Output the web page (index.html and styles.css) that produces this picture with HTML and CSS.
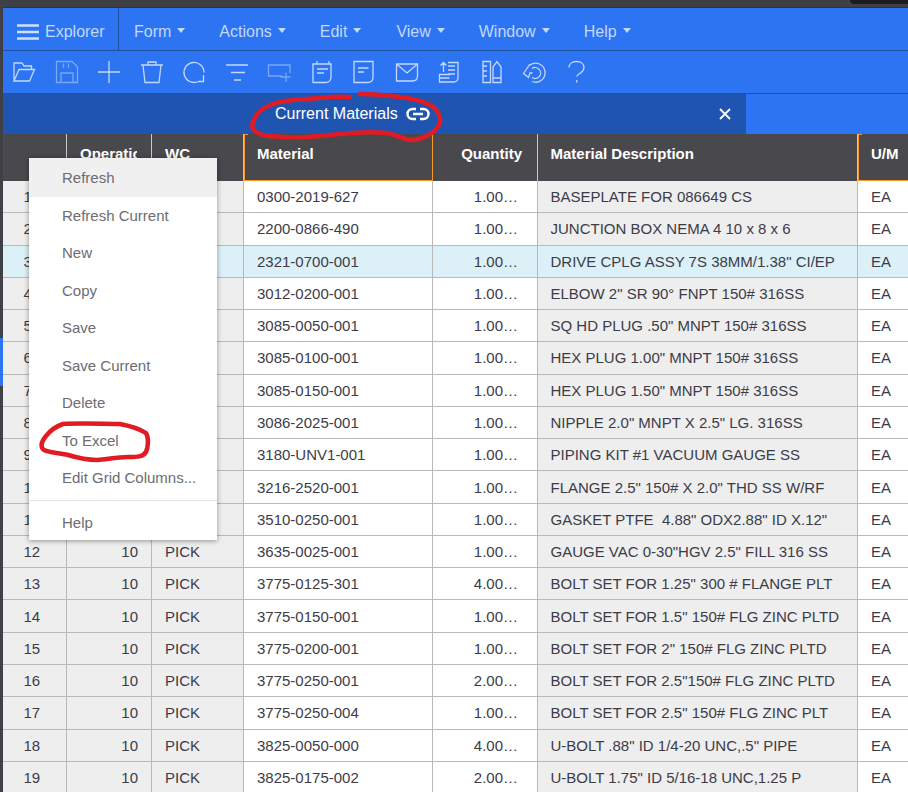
FILE: index.html
```html
<!DOCTYPE html>
<html lang="en">
<head>
<meta charset="utf-8">
<title>Current Materials</title>
<link rel="stylesheet" href="styles.css">
</head>
<body>
<div class="page">
  <div class="corner"></div>
  <nav class="menubar">
    <div class="explorer">
      <svg class="burger" viewBox="0 0 22 16" width="22" height="16"><path d="M0 1.500h22M0 8h22M0 14.500h22"/></svg>
      <span>Explorer</span>
    </div>
    <div class="menu-items">
      <span class="mi mi-form">Form<i class="caret"></i></span>
      <span class="mi mi-actions">Actions<i class="caret"></i></span>
      <span class="mi mi-edit">Edit<i class="caret"></i></span>
      <span class="mi mi-view">View<i class="caret"></i></span>
      <span class="mi mi-window">Window<i class="caret"></i></span>
      <span class="mi mi-help">Help<i class="caret"></i></span>
    </div>
  </nav>
  <div class="toolbar">
    <svg class="ti" viewBox="0 0 22 22"><path d="M1 20V2h8l2 3h7.500v3.500M1 20h15.500l5-11.500H6L1 20z"/></svg>
    <svg class="ti dim" viewBox="0 0 22 22"><path d="M.5 .5h15.500l5.500 5.500v15.500H.5zM5 21.500V12h12v9.500M7.500 2.500V7M12.500 2.500V7"/></svg>
    <svg class="ti" viewBox="0 0 22 22"><path d="M11 0v22M0 11h22"/></svg>
    <svg class="ti" viewBox="0 0 22 22"><path d="M0 4h22M2 4l2 17.500h14L20 4M7 4V1h8v3"/></svg>
    <svg class="ti" viewBox="0 0 22 22"><path d="M14.500 20.800A10 10 0 1 1 21 11.500M20.500 14v6.500H15"/></svg>
    <svg class="ti" viewBox="0 0 22 22"><path d="M0 4h22M5 11.500h14M8 19h7"/></svg>
    <svg class="ti dim" viewBox="0 0 22 22"><path d="M14 15H.5V4H22v8M18 11.500V21M12.500 16h10"/></svg>
    <svg class="ti" viewBox="0 0 22 22"><path d="M2 3h18v13q0 5-5 5.500H2zM6 0v3M18 0v3M6 8h11M6 12h7"/></svg>
    <svg class="ti" viewBox="0 0 22 22"><path d="M1 .5h19v16q0 4.500-5 5H1zM5 7h10.500M5 11h6"/></svg>
    <svg class="ti" viewBox="0 0 22 22"><path d="M.5 3h21v12q0 5-5 5H.5zM.5 3 11 12l10.500-9"/></svg>
    <svg class="ti" viewBox="0 0 22 22"><path d="M5.500 11V1.500M2.500 4.500l3-3 3 3M10 1.500h10v15q0 4-4 4.500H1.500v-7.500H12M10 5h7M10 9h7M10 13h7M1.500 17h10"/></svg>
    <svg class="ti" viewBox="0 0 22 22"><path d="M2 .5h7.500v21H2zM2 5h4M2 10h4M2 15h4M12 21.500V6l4-5.500L20 6v15.500zM12 17h8"/></svg>
    <svg class="ti" viewBox="0 0 22 22"><path d="M7 4A9.500 9.500 0 1 1 9 20.500M9 7.500A5.500 5.500 0 1 1 9 16.500M7 3 .5 12.500l5 4L7 12h2.500"/></svg>
    <svg class="ti" viewBox="0 0 22 22"><path d="M3 6.500C3 3 6 .5 10.500 .5S18 3 18 6.500c0 3.500-2.500 5-5 6.500-1.500 1-2.300 2.500-2.300 2.500M10.700 19v2.500"/></svg>
  </div>
  <div class="tabbar">
    <div class="tab">
      <span class="tab-title">Current Materials</span>
      <svg class="link" viewBox="0 0 24 14" width="24" height="14"><path d="M10 2H6.500a5 5 0 0 0 0 10H10M14 2h3.500a5 5 0 0 1 0 10H14M7 7h10"/></svg>
      <svg class="close" viewBox="0 0 12 12" width="12" height="12"><path d="M1 1l10 10M11 1 1 11"/></svg>
    </div>
  </div>
  <div class="grid">
    <div class="row head">
      <div class="c c-n"></div>
      <div class="c c-op"><span class="clip">Operation</span></div>
      <div class="c c-wc">WC</div>
      <div class="c c-mat sorted">Material</div>
      <div class="c c-qty">Quantity</div>
      <div class="c c-desc">Material Description</div>
      <div class="c c-um sorted">U/M</div>
    </div>
    <div class="row"><div class="c c-n">1</div><div class="c c-op"></div><div class="c c-wc"></div><div class="c c-mat">0300-2019-627</div><div class="c c-qty">1.00…</div><div class="c c-desc">BASEPLATE FOR 086649 CS</div><div class="c c-um">EA</div></div>
    <div class="row"><div class="c c-n">2</div><div class="c c-op"></div><div class="c c-wc"></div><div class="c c-mat">2200-0866-490</div><div class="c c-qty">1.00…</div><div class="c c-desc">JUNCTION BOX NEMA 4 10 x 8 x 6</div><div class="c c-um">EA</div></div>
    <div class="row selected"><div class="c c-n">3</div><div class="c c-op"></div><div class="c c-wc"></div><div class="c c-mat">2321-0700-001</div><div class="c c-qty">1.00…</div><div class="c c-desc">DRIVE CPLG ASSY 7S 38MM/1.38" CI/EP</div><div class="c c-um">EA</div></div>
    <div class="row"><div class="c c-n">4</div><div class="c c-op"></div><div class="c c-wc"></div><div class="c c-mat">3012-0200-001</div><div class="c c-qty">1.00…</div><div class="c c-desc">ELBOW 2" SR 90° FNPT 150# 316SS</div><div class="c c-um">EA</div></div>
    <div class="row"><div class="c c-n">5</div><div class="c c-op"></div><div class="c c-wc"></div><div class="c c-mat">3085-0050-001</div><div class="c c-qty">1.00…</div><div class="c c-desc">SQ HD PLUG .50" MNPT 150# 316SS</div><div class="c c-um">EA</div></div>
    <div class="row"><div class="c c-n">6</div><div class="c c-op"></div><div class="c c-wc"></div><div class="c c-mat">3085-0100-001</div><div class="c c-qty">1.00…</div><div class="c c-desc">HEX PLUG 1.00" MNPT 150# 316SS</div><div class="c c-um">EA</div></div>
    <div class="row"><div class="c c-n">7</div><div class="c c-op"></div><div class="c c-wc"></div><div class="c c-mat">3085-0150-001</div><div class="c c-qty">1.00…</div><div class="c c-desc">HEX PLUG 1.50" MNPT 150# 316SS</div><div class="c c-um">EA</div></div>
    <div class="row"><div class="c c-n">8</div><div class="c c-op"></div><div class="c c-wc"></div><div class="c c-mat">3086-2025-001</div><div class="c c-qty">1.00…</div><div class="c c-desc">NIPPLE 2.0" MNPT X 2.5" LG. 316SS</div><div class="c c-um">EA</div></div>
    <div class="row"><div class="c c-n">9</div><div class="c c-op"></div><div class="c c-wc"></div><div class="c c-mat">3180-UNV1-001</div><div class="c c-qty">1.00…</div><div class="c c-desc">PIPING KIT #1 VACUUM GAUGE SS</div><div class="c c-um">EA</div></div>
    <div class="row"><div class="c c-n">10</div><div class="c c-op"></div><div class="c c-wc"></div><div class="c c-mat">3216-2520-001</div><div class="c c-qty">1.00…</div><div class="c c-desc">FLANGE 2.5" 150# X 2.0" THD SS W/RF</div><div class="c c-um">EA</div></div>
    <div class="row"><div class="c c-n">11</div><div class="c c-op"></div><div class="c c-wc"></div><div class="c c-mat">3510-0250-001</div><div class="c c-qty">1.00…</div><div class="c c-desc">GASKET PTFE &nbsp;4.88" ODX2.88" ID X.12"</div><div class="c c-um">EA</div></div>
    <div class="row"><div class="c c-n">12</div><div class="c c-op">10</div><div class="c c-wc">PICK</div><div class="c c-mat">3635-0025-001</div><div class="c c-qty">1.00…</div><div class="c c-desc">GAUGE VAC 0-30"HGV 2.5" FILL 316 SS</div><div class="c c-um">EA</div></div>
    <div class="row"><div class="c c-n">13</div><div class="c c-op">10</div><div class="c c-wc">PICK</div><div class="c c-mat">3775-0125-301</div><div class="c c-qty">4.00…</div><div class="c c-desc">BOLT SET FOR 1.25" 300 # FLANGE PLT</div><div class="c c-um">EA</div></div>
    <div class="row"><div class="c c-n">14</div><div class="c c-op">10</div><div class="c c-wc">PICK</div><div class="c c-mat">3775-0150-001</div><div class="c c-qty">1.00…</div><div class="c c-desc">BOLT SET FOR 1.5" 150# FLG ZINC PLTD</div><div class="c c-um">EA</div></div>
    <div class="row"><div class="c c-n">15</div><div class="c c-op">10</div><div class="c c-wc">PICK</div><div class="c c-mat">3775-0200-001</div><div class="c c-qty">1.00…</div><div class="c c-desc">BOLT SET FOR 2" 150# FLG ZINC PLTD</div><div class="c c-um">EA</div></div>
    <div class="row"><div class="c c-n">16</div><div class="c c-op">10</div><div class="c c-wc">PICK</div><div class="c c-mat">3775-0250-001</div><div class="c c-qty">2.00…</div><div class="c c-desc">BOLT SET FOR 2.5"150# FLG ZINC PLTD</div><div class="c c-um">EA</div></div>
    <div class="row"><div class="c c-n">17</div><div class="c c-op">10</div><div class="c c-wc">PICK</div><div class="c c-mat">3775-0250-004</div><div class="c c-qty">1.00…</div><div class="c c-desc">BOLT SET FOR 2.5" 150# FLG ZINC PLT</div><div class="c c-um">EA</div></div>
    <div class="row"><div class="c c-n">18</div><div class="c c-op">10</div><div class="c c-wc">PICK</div><div class="c c-mat">3825-0050-000</div><div class="c c-qty">4.00…</div><div class="c c-desc">U-BOLT .88" ID 1/4-20 UNC,.5" PIPE</div><div class="c c-um">EA</div></div>
    <div class="row"><div class="c c-n">19</div><div class="c c-op">10</div><div class="c c-wc">PICK</div><div class="c c-mat">3825-0175-002</div><div class="c c-qty">2.00…</div><div class="c c-desc">U-BOLT 1.75" ID 5/16-18 UNC,1.25 P</div><div class="c c-um">EA</div></div>
  </div>
  <div class="left-accent"></div>
  <ul class="context">
    <li class="hover">Refresh</li>
    <li>Refresh Current</li>
    <li>New</li>
    <li>Copy</li>
    <li>Save</li>
    <li>Save Current</li>
    <li>Delete</li>
    <li>To Excel</li>
    <li>Edit Grid Columns...</li>
    <li class="sep">Help</li>
  </ul>
  <svg class="ink" viewBox="0 0 908 792" width="908" height="792">
    <path d="M350 97C330 96 320 98 307 99C290 100 280 101 273 104C263 108 258 112 256 116C252 122 251 127 254 130C258 134 262 135 268 136C280 137 295 138 307 137C320 136 330 135 340 134C360 132 375 132 387 133C397 134 405 141 413 140C422 139 428 136 433 132C438 127 441 124 440 119C439 112 436 108 430 105C420 100 410 98 400 97C385 95 372 94 360 94"/>
    <path d="M63 424C80 423 105 424 120 424C130 426 140 429 146 433C149 438 148 448 146 452C143 457 137 457 128 457C118 457 108 459 97 460C88 460 78 458 68 455C60 453 50 453 44 450C40 447 41 442 46 436C50 431 57 426 63 424Z"/>
  </svg>
</div>
</body>
</html>
```
FILE: styles.css
```css
* { box-sizing: border-box; }
html, body { margin: 0; height: 100%; overflow: hidden; }
body { background: #3f4045; font-family: "Liberation Sans", Arial, sans-serif; }
.page { position: relative; width: 908px; height: 792px; overflow: hidden; padding: 8px 0 0 3px; background: #3f4045; }
.corner { position: absolute; right: 0; top: 0; width: 58px; height: 4px; background: #1c1c1e; border-bottom-left-radius: 4px; }

.menubar { display: flex; height: 43px; background: #2c74f2; border-bottom: 1px solid #1f539f; box-shadow: 0 -1px 0 #333438; color: #c3d8fb; font-size: 16px; }
.explorer { display: flex; align-items: center; gap: 6px; width: 116px; padding: 5px 0 0 14px; border-right: 1px solid #1f539f; }
.burger { fill: none; stroke: #cfe0fd; stroke-width: 2.500; flex: none; }
.menu-items { display: flex; align-items: center; padding-top: 5px; }
.mi { display: inline-flex; align-items: center; }
.mi-form { margin-left: 15px; }
.mi-actions { margin-left: 34px; }
.mi-edit { margin-left: 34px; }
.mi-view { margin-left: 35px; }
.mi-window { margin-left: 34px; }
.mi-help { margin-left: 34px; }
.caret { width: 0; height: 0; margin-left: 6px; margin-top: -3px; border-left: 4px solid transparent; border-right: 4px solid transparent; border-top: 5px solid #c3d8fb; }

.toolbar { display: flex; align-items: center; gap: 20.500px; height: 42px; padding-left: 10px; background: #2c74f2; }
.ti { width: 22px; height: 22px; fill: none; stroke: #c3d8fb; stroke-width: 1.300; flex: none; overflow: visible; }
.ti.dim { stroke: #7aa8f5; }

.tabbar { height: 41px; background: #2c74f2; border-top: 1px solid #1f539f; }
.tab { display: flex; align-items: center; width: 743px; height: 40px; background: #1f55b0; padding-left: 272px; color: #fff; font-size: 16px; }
.tab-title { white-space: nowrap; }
.link { margin-left: 8px; fill: none; stroke: #fff; stroke-width: 2.400; }
.close { margin-left: 289px; fill: none; stroke: #fff; stroke-width: 1.800; }

.grid { font-size: 15px; color: #3c3c48; }
.row { display: grid; grid-template-columns: 64px 85px 92px 189px 105px 320px 50px; height: 32.280px; background: #fff; border-bottom: 1px solid #b9b9b9; }
.row .c { display: flex; align-items: center; padding: 0 13px; white-space: nowrap; overflow: hidden; border-right: 1px solid #b9b9b9; }
.row .c-n { justify-content: flex-start; padding-left: 20.500px; background: #eeeeee; }
.row .c-op { justify-content: flex-end; padding-right: 13px; background: #eeeeee; }
.row .c-wc { background: #eeeeee; }
.row .c-qty { justify-content: flex-end; padding-right: 19px; }
.row .c-desc { background: #eeeeee; padding-left: 12.500px; }
.row .c-um { border-right: 0; }
.row.selected, .row.selected .c { background: #dcf0f7; }

.row.head { height: 47px; background: #48484d; color: #fff; font-weight: 700; border-bottom: 0; }
.row.head .c { align-items: flex-start; padding-top: 11px; background: #48484d; border-right: 1px solid #c8c8c8; }
.row.head .c-op { justify-content: flex-start; }
.clip { display: block; width: 57px; overflow: hidden; }
.row.head .c-qty { padding-right: 15px; }
.row.head .sorted { background: linear-gradient(#f59a1e, #f59a1e) 0 0 / 3px 1px no-repeat, #48484d; border-left: 1px solid #f59a1e; border-bottom: 1px solid #f59a1e; }
.row.head .c-mat { border-right: 1px solid #f59a1e; padding-left: 12px; }
.row.head .c-um { border-right: 0; padding-left: 12px; }

.left-accent { position: absolute; left: 0; top: 338px; width: 3px; height: 48px; background: #2c74f2; }

.context { position: absolute; left: 29px; top: 158px; width: 188px; height: 382px; margin: 0; padding: 0; list-style: none; background: #fff; box-shadow: 0 1px 5px rgba(0,0,0,.4); color: #6c6c72; font-size: 15px; }
.context li { display: flex; align-items: center; height: 37.500px; padding-left: 33px; }
.context li.hover { height: 38.500px; padding-top: 0; background: #f0f0f0; }
.context li.sep { height: 40.500px; margin-top: 3px; padding-top: 5px; border-top: 1px solid #e2e2e2; }

.ink { position: absolute; left: 0; top: 0; pointer-events: none; fill: none; stroke: #e01b24; stroke-width: 4.500; stroke-linecap: round; stroke-linejoin: round; }
```
